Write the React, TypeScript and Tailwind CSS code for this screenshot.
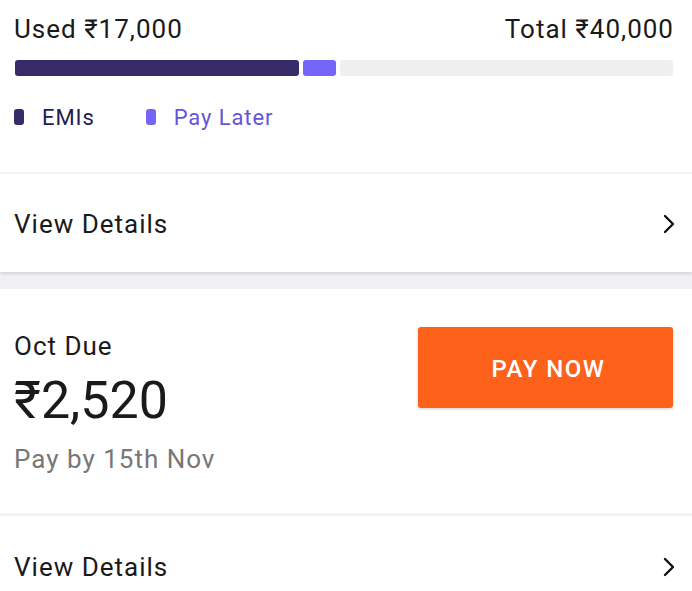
import React from 'react';

const Chevron = () => (
  <svg width="12" height="20" viewBox="0 0 12 20" fill="none" className="shrink-0">
    <polyline points="2,2 10,10 2,18" stroke="#111" strokeWidth="2.4" strokeLinecap="round" strokeLinejoin="round" />
  </svg>
);

const DetailsRow = ({ className }: { className: string }) => (
  <div className={`flex items-center justify-between pl-[14px] pr-[17px] ${className}`}>
    <span className="text-[26px] leading-[30px] tracking-[1px] text-[#1a1a1a]">View Details</span>
    <Chevron />
  </div>
);

export default function App() {
  return (
    <div className="w-[692px] h-[591px] overflow-hidden bg-[#f1f1f3] font-['Roboto',sans-serif]">
      {/* credit usage card */}
      <div className="bg-white shadow-[0_2px_3px_rgba(0,0,0,0.12)]">
        <div className="pl-[14px] pr-[19px] pt-[14px] pb-[43px]">
          <div className="flex justify-between text-[26px] leading-[30px] tracking-[1px] text-[#1a1a1a]">
            <span>Used ₹17,000</span>
            <span className="mr-[-1px]">Total ₹40,000</span>
          </div>
          <div className="mt-[16px] flex h-[16px] gap-[4px] pl-[1px]">
            <div className="w-[284px] rounded-[3px] bg-[#372c69]" />
            <div className="w-[33px] rounded-[3px] bg-[#7565f6]" />
            <div className="flex-1 rounded-[3px] bg-[#efefef]" />
          </div>
          <div className="mt-[29px] flex items-center h-[24px] text-[22px] tracking-[0.9px]">
            <span className="w-[10px] h-[16px] rounded-[3px] bg-[#372c69]" />
            <span className="ml-[18px] text-[#241d52]">EMIs</span>
            <span className="ml-[51px] w-[10px] h-[16px] rounded-[3px] bg-[#7565f6]" />
            <span className="ml-[18px] text-[#6556d6]">Pay Later</span>
          </div>
        </div>
        <div className="h-[2px] bg-[#f3f3f3]" />
        <DetailsRow className="h-[98px] pt-[1px]" />
      </div>

      {/* due card */}
      <div className="mt-[17px] bg-white">
        <div className="flex items-start justify-between pl-[14px] pr-[19px] pt-[42px] pb-[39px]">
          <div className="flex flex-col">
            <span className="text-[26px] leading-[30px] tracking-[1px] text-[#1a1a1a]">Oct Due</span>
            <span className="mt-[10px] text-[52px] leading-[60px] text-[#1a1a1a]">₹2,520</span>
            <span className="mt-[13px] text-[26px] leading-[30px] tracking-[1px] text-[#777]">Pay by 15th Nov</span>
          </div>
          <button className="mt-[-4px] w-[255px] h-[81px] pt-[3px] pl-[6px] rounded-[3px] bg-[#fd611a] text-white text-[24px] font-medium tracking-[1.5px] shadow-[0_1px_3px_rgba(0,0,0,0.2)]">
            PAY NOW
          </button>
        </div>
        <div className="h-[3px] bg-[#f3f3f3]" />
        <DetailsRow className="h-[101px]" />
      </div>
    </div>
  );
}
